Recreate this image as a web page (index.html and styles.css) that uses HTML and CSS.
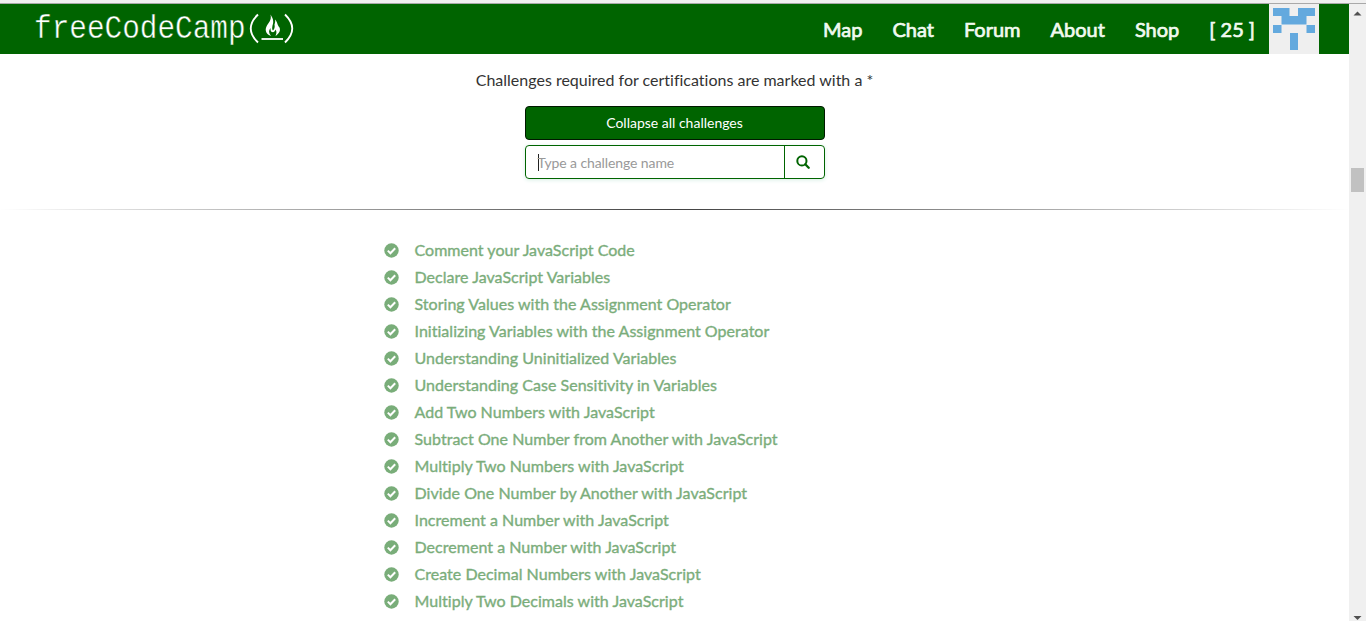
FILE: index.html
```
<!DOCTYPE html>
<html lang="en">
<head>
<meta charset="utf-8">
<title>Map | freeCodeCamp</title>
<link rel="stylesheet" href="styles.css">
</head>
<body>
<div class="window-edge"></div>
<div class="viewport">
  <div class="page">
    <header class="navbar">
      <a class="brand"><span class="brand-name">freeCodeCamp</span><svg class="brand-mark" width="52" height="34" viewBox="0 0 52 34">
        <path d="M12 3.500Q-2.500 17.500 12 31.500M39 3.500Q53.500 17.500 39 31.500" fill="none" stroke="#fff" stroke-width="1.900"/>
        <path d="M15.500 28H37" stroke="#fff" stroke-width="1.800"/>
        <path d="M24.500 3.500C28 9 27.500 11.500 26.500 14.500C26 17 26 18.500 27 19.500C28.500 18 29 16 28.500 13.500C29 11.500 29.500 10.500 29 8.500C32 11.500 31 14 33.500 16.500C35 20 32.500 23 29.500 25C31 21.500 30.500 20 29.500 18.500C29 20.500 27.500 21.500 26 21C24.500 20.500 24.500 18.500 24.500 17C22.500 19.500 22.500 22 25 25C20.500 23.500 18.500 19.500 20.500 15.500C22 12 26 9.500 24.500 3.500Z" fill="#fff"/>
      </svg></a>
      <nav class="menu">
        <a>Map</a><a>Chat</a><a>Forum</a><a>About</a><a>Shop</a><a>[ 25 ]</a>
      </nav>
      <svg class="avatar" width="50" height="50" viewBox="0 0 50 50">
        <path fill="#efefef" d="M0 0H50V50H0Z"/>
        <path fill="#63a9de" d="M4 4H20.500V12H29V4H46V12H37.500V20.500H12.500V12H4ZM4 21H12.500V29H4ZM37.500 21H46V29H37.500ZM21 29H29V46H21Z"/>
      </svg>
    </header>
    <main>
      <p class="note">Challenges required for certifications are marked with a *</p>
      <div class="controls">
        <button class="collapse">Collapse all challenges</button>
        <div class="search">
          <div class="field"><span class="caret"></span><span class="hint">Type a challenge name</span></div>
          <div class="addon"><svg width="14" height="14" viewBox="0 0 14 14" fill="none" stroke="#006400"><circle cx="5.900" cy="5.900" r="4.600" stroke-width="2"/><path d="M9.300 9.300L12.700 12.700" stroke-width="2.300" stroke-linecap="round"/></svg></div>
        </div>
      </div>
      <div class="rule"></div>
      <svg class="defs" width="0" height="0"><symbol id="done" viewBox="0 0 15 15"><circle cx="7.500" cy="7.500" r="7.200" fill="#006400"/><path d="M3.800 7.600L6.400 10.200L11.200 5.200" fill="none" stroke="#fff" stroke-width="2"/></symbol></svg>
      <ul class="challenges">
        <li><svg><use href="#done"/></svg><span>Comment your JavaScript Code</span></li>
        <li><svg><use href="#done"/></svg><span>Declare JavaScript Variables</span></li>
        <li><svg><use href="#done"/></svg><span>Storing Values with the Assignment Operator</span></li>
        <li><svg><use href="#done"/></svg><span>Initializing Variables with the Assignment Operator</span></li>
        <li><svg><use href="#done"/></svg><span>Understanding Uninitialized Variables</span></li>
        <li><svg><use href="#done"/></svg><span>Understanding Case Sensitivity in Variables</span></li>
        <li><svg><use href="#done"/></svg><span>Add Two Numbers with JavaScript</span></li>
        <li><svg><use href="#done"/></svg><span>Subtract One Number from Another with JavaScript</span></li>
        <li><svg><use href="#done"/></svg><span>Multiply Two Numbers with JavaScript</span></li>
        <li><svg><use href="#done"/></svg><span>Divide One Number by Another with JavaScript</span></li>
        <li><svg><use href="#done"/></svg><span>Increment a Number with JavaScript</span></li>
        <li><svg><use href="#done"/></svg><span>Decrement a Number with JavaScript</span></li>
        <li><svg><use href="#done"/></svg><span>Create Decimal Numbers with JavaScript</span></li>
        <li><svg><use href="#done"/></svg><span>Multiply Two Decimals with JavaScript</span></li>
      </ul>
    </main>
  </div>
  <div class="scrollbar">
    <svg width="17" height="17"><path d="M4.500 11.500L8.500 7.500L12.500 11.500Z" fill="#505050"/></svg>
    <div class="thumb"></div>
    <svg class="down" width="17" height="7"><path d="M4.500 2L8.500 6L12.500 2Z" fill="#505050"/></svg>
  </div>
</div>
</body>
</html>
```
FILE: styles.css
```
* { box-sizing: border-box; }
body { margin: 0; height: 621px; overflow: hidden; background: #fff; font-family: Lato, sans-serif; font-variant-ligatures: none; color: #333; }
.window-edge { height: 4px; background: #f0f0f0; border-bottom: 1px solid #a9a9a9; }
.viewport { display: flex; height: 617px; }
.page { width: 1349px; overflow: hidden; }
.navbar { display: flex; height: 50px; padding: 0 30px 0 34px; background: #006400; color: #fff; }
.brand { display: flex; width: 263px; }
.brand-name { width: 212px; font: 29.400px/52px "Liberation Mono", monospace; transform: scaleY(1.100); -webkit-text-stroke: .4px #006400; }
.brand-mark { flex: none; margin-top: 7px; }
.menu { display: flex; gap: 30px; margin-left: auto; padding-right: 14px; font-size: 20px; line-height: 51px; color: #f2faf0; -webkit-text-stroke: .7px #f2faf0; white-space: nowrap; }
.avatar { flex: none; }
.note { margin: 14px 0 0; text-align: center; font-size: 16px; line-height: 23px; }
.controls { width: 300px; margin: 15px auto 0; }
.collapse { display: block; width: 300px; height: 34px; border: 1px solid #001800; border-radius: 4px; background: #006400; color: #fff; font: 14px/20px Lato, sans-serif; }
.search { display: flex; height: 34px; margin-top: 5px; border: 1px solid #006400; border-radius: 4px; box-shadow: 0 1px 4px #d8efe5; }
.field { display: flex; align-items: center; width: 259px; padding-left: 12px; border-right: 1px solid #006400; color: #999; font-size: 14px; letter-spacing: -.1px; }
.caret { width: 1px; height: 17px; margin-right: -1px; background: #222; }
.hint { padding-top: 2px; line-height: 20px; }
.addon { display: flex; flex: 1; align-items: center; justify-content: center; padding-right: 2px; }
.rule { height: 1px; margin: 30px 0 0; background: linear-gradient(to right, transparent, #404040 50%, transparent); }
.defs { display: block; }
.challenges { margin: 27px 0 0; padding: 0 0 0 384px; list-style: none; }
.challenges li { display: flex; align-items: center; height: 27px; gap: 15.500px; color: #006400; font-size: 16px; letter-spacing: .03px; opacity: .52; -webkit-text-stroke: .4px #006400; }
.challenges span { padding-bottom: 2px; }
.challenges svg { width: 15px; height: 15px; }
.scrollbar { display: flex; flex-direction: column; width: 17px; background: #f0f0f0; }
.thumb { width: 13px; height: 24px; margin: 147px 0 0 2px; background: #c1c1c1; }
.down { margin-top: auto; }
```
